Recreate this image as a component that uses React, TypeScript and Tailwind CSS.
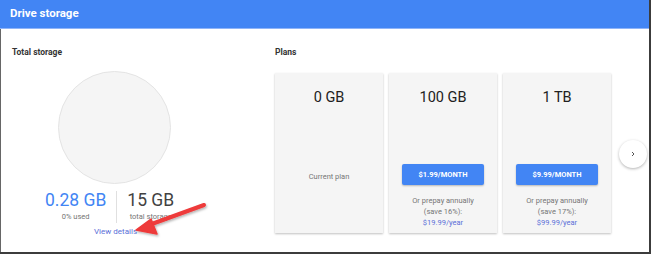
import React from "react";

const font = { fontFamily: "Roboto, 'Noto Sans', Arial, sans-serif" };

type Plan = { size: string; current?: boolean; price?: string; save?: string; year?: string };

const plans: Plan[] = [
  { size: "0 GB", current: true },
  { size: "100 GB", price: "$1.99/MONTH", save: "(save 16%):", year: "$19.99/year" },
  { size: "1 TB", price: "$9.99/MONTH", save: "(save 17%):", year: "$99.99/year" },
];

function PlanCard({ p }: { p: Plan }) {
  return (
    <div className="w-[108px] h-[160px] bg-[#f5f5f5] shadow-[0_1px_2px_rgba(0,0,0,0.25)] flex flex-col items-center">
      <div className="mt-[16px] text-[14.5px] leading-[17px] text-[#212121]">{p.size}</div>
      {p.current ? (
        <div className="mt-[66px] text-[7.5px] leading-[10px] text-[#757575]">Current plan</div>
      ) : (
        <>
          <div className="mt-[58px] w-[82px] h-[21px] bg-[#4285f4] rounded-[2px] shadow-[0_1px_2px_rgba(0,0,0,0.25)] flex items-center justify-center text-white font-bold text-[7.5px]">
            {p.price}
          </div>
          <div className="mt-[10px] text-[7.5px] leading-[11px] text-[#757575] text-center">
            <div>Or prepay annually</div>
            <div>{p.save}</div>
            <div className="text-[#5a6fd8]">{p.year}</div>
          </div>
        </>
      )}
    </div>
  );
}

export default function App() {
  return (
    <div style={font} className="w-[651px] h-[254px] bg-white relative overflow-hidden border-r-2 border-b-2 border-[#3c3c3c]">
      <div className="h-[29px] bg-[#4285f4] border-b border-[#8fb4f8] flex items-center pl-[10px]">
        <span className="text-white font-bold text-[11.5px]">Drive storage</span>
      </div>
      <div className="flex h-[223px] border-l border-[#666]">
        <div className="w-[274px] relative">
          <div className="pl-[11px] pt-[17px] text-[8.5px] leading-[12px] font-bold text-[#333]">Total storage</div>
          <div className="ml-[57px] mt-[13px] w-[113px] h-[113px] rounded-full bg-[#f5f5f5] border border-[#e4e4e4]" />
          <div className="flex pl-[44px] mt-[4px]">
            <div className="flex flex-col items-center">
              <div className="text-[17.5px] leading-[24px] text-[#4285f4]">0.28 GB</div>
              <div className="text-[7.5px] leading-[10px] text-[#757575]">0% used</div>
            </div>
            <div className="mx-[10px] w-px h-[32px] mt-[3px] bg-[#e0e0e0]" />
            <div className="flex flex-col items-center">
              <div className="text-[17.5px] leading-[24px] text-[#424242]">15 GB</div>
              <div className="text-[7.5px] leading-[10px] text-[#757575]">total storage</div>
            </div>
          </div>
          <div className="pl-[93px] mt-[4px] text-[8px] leading-[10px] text-[#5a6fd8]">View details</div>
          <svg className="absolute left-0 top-0" width="274" height="223" viewBox="0 30 274 223">
            <defs>
              <filter id="sh" x="-20%" y="-20%" width="140%" height="160%">
                <feDropShadow dx="1" dy="1.5" stdDeviation="1" floodColor="#000" floodOpacity="0.3" />
              </filter>
            </defs>
            <g filter="url(#sh)">
              <line x1="203" y1="206" x2="148" y2="226" stroke="#ee3a3a" strokeWidth="4" strokeLinecap="round" />
              <polygon points="135,231 150,220 156,235" fill="#ee3a3a" stroke="#ee3a3a" strokeWidth="1.5" strokeLinejoin="round" />
            </g>
          </svg>
        </div>
        <div className="flex-1">
          <div className="pt-[17px] text-[8.5px] leading-[12px] font-bold text-[#333]">Plans</div>
          <div className="flex items-center mt-[15px]">
            <div className="flex gap-[6px]">
              {plans.map((p) => (
                <PlanCard key={p.size} p={p} />
              ))}
            </div>
            <div className="ml-[8px] mt-[1px] w-[28px] h-[28px] rounded-full bg-white shadow-[0_1px_3px_rgba(0,0,0,0.3)] flex items-center justify-center">
              <svg width="8" height="8" viewBox="0 0 8 8">
                <path d="M3 2 L5 4 L3 6" fill="none" stroke="#555" strokeWidth="1" />
              </svg>
            </div>
          </div>
        </div>
      </div>
    </div>
  );
}
